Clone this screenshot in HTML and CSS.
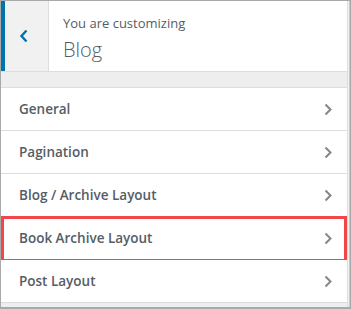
FILE: index.html
```html
<!DOCTYPE html>
<html>
	<head>
		<meta charset="UTF-8" />
		<title>Customizer - Blog</title>
		<link rel="stylesheet" href="styles.css">
	</head>
	<body>
		<div class="frame">
			<div class="panel">
				<div class="panel-head">
					<a class="back" href="javascript:void(0);">
						<svg width="10" height="14" viewBox="0 0 10 14"><polyline points="7.5,1.5 2.5,7 7.5,12.5" fill="none" stroke="#0073aa" stroke-width="2.4"/></svg>
					</a>
					<div class="head-info">
						<span class="head-sub">You are customizing</span>
						<h3 class="head-title">Blog</h3>
					</div>
				</div>
				<ul class="sections">
					<li class="section">General<svg class="chev" width="8" height="13" viewBox="0 0 8 13"><polyline points="1.5,1.5 6.5,6.5 1.5,11.5" fill="none" stroke="#82878c" stroke-width="2"/></svg></li>
					<li class="section">Pagination<svg class="chev" width="8" height="13" viewBox="0 0 8 13"><polyline points="1.5,1.5 6.5,6.5 1.5,11.5" fill="none" stroke="#82878c" stroke-width="2"/></svg></li>
					<li class="section">Blog / Archive Layout<svg class="chev" width="8" height="13" viewBox="0 0 8 13"><polyline points="1.5,1.5 6.5,6.5 1.5,11.5" fill="none" stroke="#82878c" stroke-width="2"/></svg></li>
					<li class="section marked">Book Archive Layout<svg class="chev" width="8" height="13" viewBox="0 0 8 13"><polyline points="1.5,1.5 6.5,6.5 1.5,11.5" fill="none" stroke="#82878c" stroke-width="2"/></svg></li>
					<li class="section">Post Layout<svg class="chev" width="8" height="13" viewBox="0 0 8 13"><polyline points="1.5,1.5 6.5,6.5 1.5,11.5" fill="none" stroke="#82878c" stroke-width="2"/></svg></li>
				</ul>
			</div>
			<div class="scroll"></div>
		</div>
	</body>
</html>
```

FILE: styles.css
```css
* {
	margin: 0;
	padding: 0;
	box-sizing: border-box;
}
body {
	font-family: "Open Sans", "Noto Sans", sans-serif;
	background: #fff;
}
.frame {
	width: 351px;
	height: 309px;
	border: 1px solid #a9a9a9;
	border-bottom-width: 2px;
	background: #eee;
	display: flex;
	overflow: hidden;
}
.panel {
	flex: 1;
	border-right: 1px solid #ddd;
}
.scroll {
	width: 2px;
	background: #f3f3f3;
	border-right: 1px solid #c9c9c9;
}
.panel-head {
	display: flex;
	height: 71px;
	background: #fff;
	border-bottom: 1px solid #ddd;
}
.back {
	display: flex;
	align-items: center;
	justify-content: center;
	width: 48px;
	background: #f1f1f1;
	border-left: 4px solid #0073aa;
	border-right: 1px solid #ddd;
	padding-right: 5px;
}
.head-info {
	padding: 12px 0 0 14px;
	color: #555d66;
}
.head-sub {
	display: block;
	font-size: 13px;
	line-height: 20px;
}
.head-title {
	font-size: 20px;
	font-weight: 300;
	line-height: 28px;
	margin-top: 3px;
}
.sections {
	list-style: none;
	margin-top: 15px;
	border-top: 1px solid #ddd;
}
.section {
	position: relative;
	display: flex;
	align-items: center;
	justify-content: space-between;
	height: 43px;
	padding: 0 15px 0 18px;
	background: #fff;
	border-bottom: 1px solid #ddd;
	color: #555d66;
	font-size: 13.5px;
	font-weight: 600;
}
.section.marked:after {
	content: '';
	position: absolute;
	top: -1px;
	bottom: -3px;
	left: 0;
	right: 0;
	border: 3px solid #f2464a;
}
```
